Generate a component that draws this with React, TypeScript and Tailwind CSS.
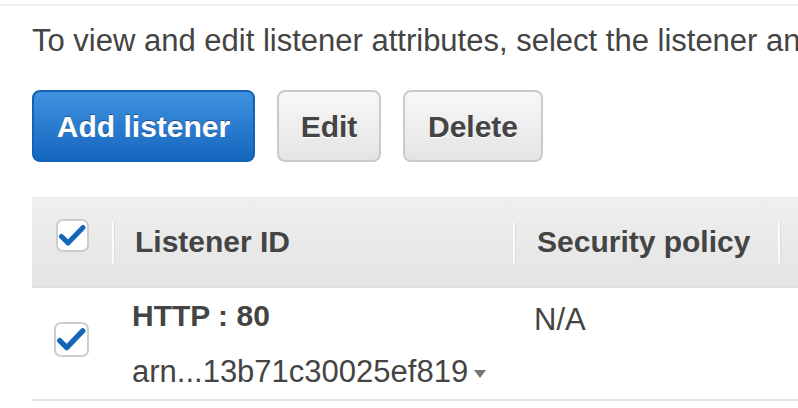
import React from "react";

function Check({ size }: { size: number }) {
  return (
    <div
      className="flex items-center justify-center rounded-[7px] border-2 border-[#cdcdcd] bg-white"
      style={{ width: size, height: size }}
    >
      <svg width={size - 4} height={size - 4} viewBox="0 0 29 29">
        <path
          d="M3.5 15.5 L10 22 L25 6.5"
          fill="none"
          stroke="#1366b8"
          strokeWidth="5"
          strokeLinecap="round"
          strokeLinejoin="round"
        />
      </svg>
    </div>
  );
}

function Sep() {
  return <div className="h-[41px] w-[2px] shrink-0 bg-[#fbfbfb] shadow-[1px_0_0_#dcdcdc]" />;
}

export default function App() {
  return (
    <div
      className="relative h-[408px] w-[798px] overflow-hidden bg-white text-[#444]"
      style={{ fontFamily: '"Liberation Sans", Arial, sans-serif' }}
    >
      <div className="mt-[4px] h-[2px] w-full bg-[#ededed]" />
      <div className="pl-[32px]">
        <p className="mt-[17px] whitespace-nowrap text-[31px] leading-[36px]">
          To view and edit listener attributes, select the listener and choose Edit.
        </p>
        <div className="mt-[31px] flex gap-[22px]">
          <button className="flex h-[72px] w-[223px] items-center justify-center rounded-[8px] border-2 border-[#1262b6] bg-gradient-to-b from-[#3f91df] to-[#1467bf] text-[30px] font-bold text-white [text-shadow:0_-1px_0_rgba(0,0,0,0.35)]">
            Add listener
          </button>
          <button className="flex h-[72px] w-[104px] items-center justify-center rounded-[8px] border-2 border-[#cacaca] bg-gradient-to-b from-[#f8f8f8] to-[#e4e4e4] text-[30px] font-bold text-[#444] [text-shadow:0_1px_0_#fff]">
            Edit
          </button>
          <button className="flex h-[72px] w-[140px] items-center justify-center rounded-[8px] border-2 border-[#cacaca] bg-gradient-to-b from-[#f8f8f8] to-[#e4e4e4] text-[30px] font-bold text-[#444] [text-shadow:0_1px_0_#fff]">
            Delete
          </button>
        </div>
        <div className="mt-[35px] w-[900px]">
          <div className="flex h-[91px] items-center border-t border-[#e6e6e6] border-b-2 border-b-[#dedede] bg-gradient-to-b from-[#efefef] to-[#e4e4e4]">
            <div className="flex w-[80px] shrink-0 self-stretch pl-[24px] pt-[21px]">
              <Check size={33} />
            </div>
            <Sep />
            <div className="w-[399px] shrink-0 pl-[21px] text-[30px] font-bold leading-[36px]">Listener ID</div>
            <Sep />
            <div className="w-[263px] shrink-0 pl-[22px] text-[30px] font-bold leading-[36px]">Security policy</div>
            <Sep />
            <div className="flex-1" />
          </div>
          <div className="flex h-[113px] border-b-2 border-[#e4e4e4]">
            <div className="w-[82px] shrink-0 pl-[22px] pt-[34px]">
              <Check size={35} />
            </div>
            <div className="w-[401px] shrink-0 pl-[18px] pt-[10px]">
              <div className="text-[30px] font-bold leading-[36px]">HTTP : 80</div>
              <div className="mt-[20px] flex items-center whitespace-nowrap text-[31px] leading-[36px]">
                <span>arn...13b71c30025ef819</span>
                <svg className="ml-[6px] mt-[4px]" width="12" height="8" viewBox="0 0 12 8">
                  <path d="M0 0 H12 L6 8 Z" fill="#777" />
                </svg>
              </div>
            </div>
            <div className="w-[265px] shrink-0 pl-[19px] pt-[14px] text-[31px] leading-[36px]">N/A</div>
          </div>
        </div>
      </div>
    </div>
  );
}
